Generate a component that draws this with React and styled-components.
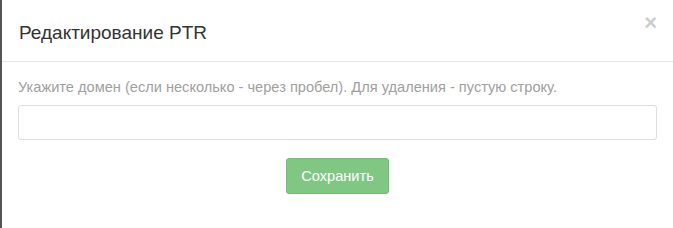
import React from 'react'
import styled, { createGlobalStyle } from 'styled-components'

const GlobalStyle = createGlobalStyle`
	html, body {
		margin: 0;
		padding: 0;
		background: #fff;
	}
	body {
		font-family: 'Liberation Sans', Arial, Helvetica, sans-serif;
		font-size: 14px;
		line-height: 1.42857;
		color: #333;
	}
	* {
		box-sizing: border-box;
	}
`

const Modal = styled.div`
	width: 673px;
	height: 228px;
	background: #fff;
	border-left: 2px solid #555;
	display: flex;
	flex-direction: column;
`

const Header = styled.div`
	display: flex;
	align-items: center;
	justify-content: space-between;
	padding: 20px 16px 15px 17px;
	border-bottom: 1px solid #e5e5e5;
`

const Title = styled.h4`
	margin: 0;
	font-size: 19px;
	font-weight: 400;
	line-height: 26px;
	color: #333;
`

const Close = styled.button`
	border: 0;
	background: transparent;
	padding: 0;
	margin: -20px 0 0 0;
	font-family: inherit;
	font-size: 22px;
	font-weight: 700;
	line-height: 1;
	color: #000;
	opacity: 0.2;
	cursor: pointer;
`

const Body = styled.div`
	padding: 15px 16px;
	display: flex;
	flex-direction: column;
`

const Hint = styled.label`
	display: block;
	color: #a0a0a0;
	font-size: 14.6px;
	line-height: 20px;
	margin-bottom: 8px;
`

const Input = styled.input`
	display: block;
	width: 100%;
	height: 35px;
	padding: 6px 12px;
	font-family: inherit;
	font-size: 14px;
	color: #555;
	background: #fff;
	border: 1px solid #ddd;
	border-radius: 3px;
	outline: none;
`

const Actions = styled.div`
	display: flex;
	justify-content: center;
	margin-top: 18px;
`

const Button = styled.button`
	height: 36px;
	padding: 0 14px;
	font-family: inherit;
	font-size: 14.6px;
	line-height: 20px;
	color: #fff;
	background: #81c784;
	border: 1px solid #73bd76;
	border-radius: 3px;
	cursor: not-allowed;
`

const App = () => (
	<>
		<GlobalStyle />
		<Modal>
			<Header>
				<Title>Редактирование PTR</Title>
				<Close aria-label="Close">×</Close>
			</Header>
			<Body>
				<Hint htmlFor="ptr">
					Укажите домен (если несколько - через пробел). Для удаления - пустую строку.
				</Hint>
				<Input id="ptr" type="text" />
				<Actions>
					<Button type="button">Сохранить</Button>
				</Actions>
			</Body>
		</Modal>
	</>
)

export default App
